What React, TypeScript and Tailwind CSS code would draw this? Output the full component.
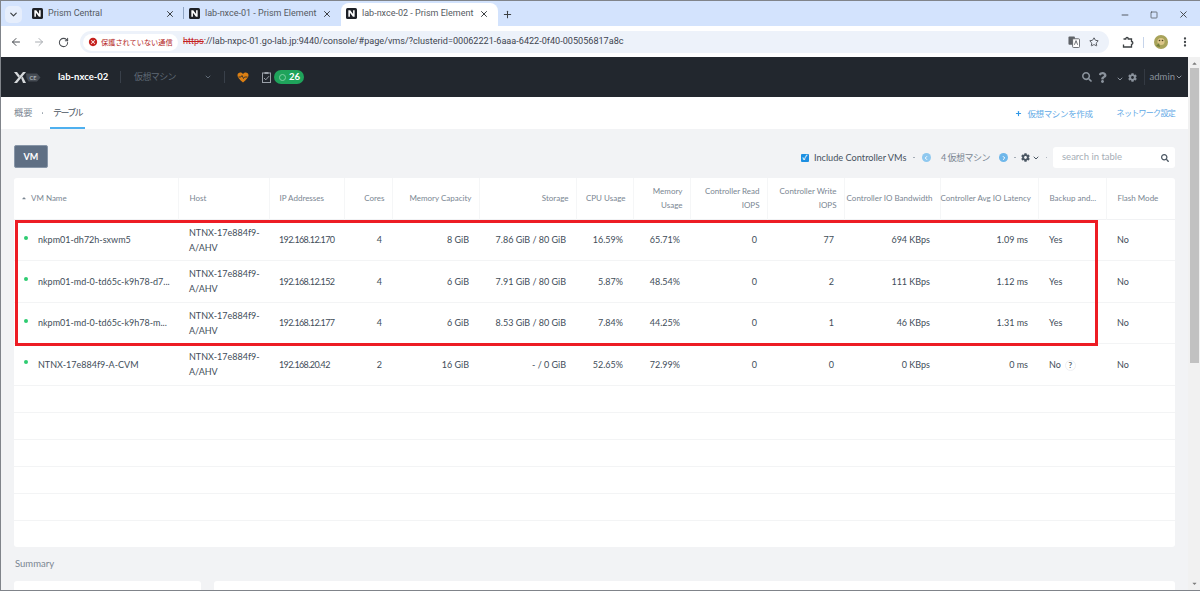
import React from "react";
import { ArrowLeft, ArrowRight, RotateCw, Star, MoreVertical, Minus, Square, X, Plus, ChevronDown, ChevronLeft, ChevronRight } from "lucide-react";
import { FaSearch, FaCog, FaQuestion, FaCaretUp, FaCaretDown } from "react-icons/fa";
import { MdCancel } from "react-icons/md";

const ui = "font-['Lato','Liberation_Sans','Noto_Sans_CJK_JP',sans-serif]";
const jp = "font-['Noto_Sans_CJK_JP',sans-serif]";

function TabLogo() {
  return (
    <svg width="11" height="11" viewBox="0 0 14 14" className="shrink-0">
      <rect width="14" height="14" rx="2" fill="#1e2127" />
      <path d="M3 3h2.400l3.600 4.600V3H11v8H8.800L5 6.200V11H3z" fill="#fff" />
    </svg>
  );
}

function Tab({ title, active, divider }: { title: string; active?: boolean; divider?: boolean }) {
  return (
    <div className={`relative flex h-[23px] w-[157px] items-center pb-[2px] pl-[5px] pr-[9px] ${active ? "rounded-t-[8px] bg-white" : ""}`}>
      <TabLogo />
      <span className="ml-[5px] flex-1 truncate font-['Roboto',sans-serif] text-[9px] text-[#555a62]">{title}</span>
      <X size={10} strokeWidth={2.4} className="text-[#3c4043]" />
      {divider && <span className="absolute right-0 top-[4px] h-[12px] w-px bg-[#8ea4c4]" />}
    </div>
  );
}

function ChromeBars() {
  return (
    <>
      <div className="flex h-[25px] items-end bg-[#d3e3fd]">
        <div className="mb-[3px] ml-[4px] flex h-[17px] w-[17px] items-center justify-center rounded-[5px] bg-[#e6eefc]">
          <ChevronDown size={11} strokeWidth={2.600} className="text-[#3c4043]" />
        </div>
        <div className="ml-[5px] flex">
          <Tab title="Prism Central" divider />
          <Tab title="lab-nxce-01 - Prism Element" />
          <Tab title="lab-nxce-02 - Prism Element" active />
        </div>
        <Plus size={11} strokeWidth={2.200} className="mb-[6px] ml-[4px] text-[#3c4043]" />
        <div className="mb-[6px] ml-auto flex items-center gap-[20px] pr-[11px] text-[#3c4043]">
          <Minus size={10} />
          <Square size={8} />
          <X size={11} />
        </div>
      </div>
      <div className="flex h-[31px] items-center bg-white pt-[1px]">
        <div className="flex w-[79px] items-center pl-[9px] text-[#4b4f54]">
          <ArrowLeft size={12} strokeWidth={2} />
          <ArrowRight size={12} strokeWidth={2} className="ml-[11px] text-[#a9adb2]" />
          <RotateCw size={11} strokeWidth={2.200} className="ml-[13px]" />
        </div>
        <div className="flex h-[22px] w-[1029px] items-center rounded-full bg-[#edf2fa] pl-[3px]">
          <div className="flex h-[17px] w-[95px] items-center rounded-full bg-white pl-[5px]">
            <MdCancel size={10} className="shrink-0 text-[#c5221f]" />
            <span className={`ml-[3px] whitespace-nowrap text-[7.200px] text-[#b3261e] ${jp}`}>保護されていない通信</span>
          </div>
          <span className="ml-[5px] whitespace-nowrap font-['Roboto',sans-serif] text-[9.100px] text-[#3e4550]">
            <span className="text-[#c5221f] line-through">https</span>://lab-nxpc-01.go-lab.jp:9440/console/#page/vms/?clusterid=00062221-6aaa-6422-0f40-005056817a8c
          </span>
          <div className="ml-auto flex items-center gap-[9px] pr-[10px] text-[#474c52]">
            <svg width="12" height="12" viewBox="0 0 13 13"><rect x="0.5" y="0.5" width="7" height="9" rx="1" fill="#5f6368" /><rect x="5" y="3" width="7.500" height="9.500" rx="1" fill="#fff" stroke="#5f6368" /><path d="M7 9.500l1.700-4.500 1.700 4.500" fill="none" stroke="#5f6368" /></svg>
            <Star size={10} strokeWidth={2.200} />
          </div>
        </div>
        <svg width="12" height="12" viewBox="0 0 12 12" className="ml-[13px]">
          <path d="M1.500 3h2.200c0-2 2.600-2 2.600 0h3.200v2.500c1.800 0 1.800 2.800 0 2.800V11H1.500V8.500" fill="none" stroke="#3c4043" strokeWidth="1.300" />
        </svg>
        <span className="ml-[9px] h-[11px] w-px bg-[#c6d4ea]" />
        <svg width="14" height="14" viewBox="0 0 14 14" className="ml-[10px]"><circle cx="7" cy="7" r="7" fill="#a8a35a" /><circle cx="7" cy="6.500" r="3.600" fill="#dcc68a" /><circle cx="5.500" cy="5.500" r="0.800" fill="#4a3e1e" /><circle cx="8.500" cy="5.500" r="0.800" fill="#4a3e1e" /><path d="M2 11l3-3 1 4z" fill="#6e7d3a" /></svg>
        <MoreVertical size={12} strokeWidth={2.600} className="ml-[11px] text-[#3c4043]" />
      </div>
    </>
  );
}

function NavBar() {
  return (
    <div className={`flex h-[40px] shrink-0 items-center bg-[#22272e] ${ui}`}>
      <svg width="27" height="11" viewBox="0 0 27 11" className="ml-[13px]">
        <path d="M0 0h3l3 4-1.500 1.800zM12 0H9L0 11h3zM7.200 6.200L8.700 4.500 12 11H9z" fill="#d5d8db" />
        <path d="M12 1.500h11l3.500 4-3.500 4H14.500L12.500 6z" fill="#454b53" />
        <text x="15.500" y="7.500" fontSize="5.500" fontWeight="700" fill="#a9afb6" fontFamily="Lato">CE</text>
      </svg>
      <span className="ml-[17px] w-[62px] text-[9.500px] font-bold text-white">lab-nxce-02</span>
      <span className="h-[12px] w-px bg-[#39404a]" />
      <span className={`ml-[13px] w-[70px] text-[9px] tracking-[-0.6px] text-[#5f6975] ${jp}`}>仮想マシン</span>
      <ChevronDown size={8} strokeWidth={3} className="text-[#5f6975]" />
      <span className="ml-[12px] h-[12px] w-px bg-[#39404a]" />
      <svg width="12" height="11" viewBox="0 0 24 22" className="ml-[12px]">
        <path d="M12 21C5 15 1 11 1 6.500 1 3 3.700 1 6.500 1 9 1 11 2.300 12 4c1-1.700 3-3 5.500-3C20.300 1 23 3 23 6.500 23 11 19 15 12 21z" fill="#db7f13" />
        <path d="M3 10h5l2-3 3 6 2-3h6" fill="none" stroke="#22272e" strokeWidth="1.600" />
      </svg>
      <svg width="9" height="11" viewBox="0 0 9 11" className="ml-[13px]">
        <rect x="0.500" y="1" width="8" height="9.500" fill="none" stroke="#9aa0a8" />
        <rect x="2.500" y="0" width="4" height="2" fill="#9aa0a8" />
        <path d="M2 6l1.800 1.800L7 4.200" fill="none" stroke="#9aa0a8" />
      </svg>
      <div className="ml-[3px] flex h-[14px] w-[30px] items-center gap-[3px] rounded-full bg-[#1fa35b] pl-[5px]">
        <span className="h-[7px] w-[7px] rounded-full border-[1.500px] border-[#7fd0a3]" />
        <span className="text-[9.500px] font-bold leading-none text-white">26</span>
      </div>
      <div className="ml-auto flex items-center pr-[5px] text-[#8a929c]">
        <FaSearch size={10} />
        <FaQuestion size={11} className="ml-[5px]" />
        <ChevronDown size={8} strokeWidth={3} className="ml-[8px] mt-[3px]" />
        <FaCog size={9} className="ml-[4px]" />
        <span className="ml-[7px] h-[16px] w-px bg-[#343a43]" />
        <span className="ml-[5px] text-[9.500px]">admin</span>
        <ChevronDown size={8} strokeWidth={3} />
      </div>
    </div>
  );
}

function SubNav() {
  return (
    <div className={`flex h-[32px] shrink-0 items-center bg-white ${ui}`}>
      <span className={`ml-[13px] text-[9.300px] text-[#7b8793] ${jp}`}>概要</span>
      <span className="ml-[9px] h-[1.500px] w-[1.500px] rounded-full bg-[#9aa3ad]" />
      <div className="relative ml-[7px] flex h-full items-center px-[3px]">
        <span className={`text-[9px] tracking-[-1.700px] text-[#4a5561] ${jp}`}>テーブル</span>
        <span className="absolute bottom-0 left-0 h-[2px] w-full bg-[#4fb0ef]" />
      </div>
      <div className={`ml-auto flex items-center pr-[13px] text-[#5fa9e6] ${jp}`}>
        <Plus size={7} strokeWidth={4} className="text-[#2f97e6]" />
        <span className="ml-[5px] text-[8.500px] tracking-[-0.350px]">仮想マシンを作成</span>
        <span className="ml-[24px] text-[8px] tracking-[-0.700px]">ネットワーク設定</span>
      </div>
    </div>
  );
}

const widths = [164, 91, 75, 48, 87, 97, 57, 57, 77, 77, 96, 98, 68, 69];
const heads: [React.ReactNode, "l" | "r"][] = [
  ["VM Name", "l"], ["Host", "l"], ["IP Addresses", "l"], ["Cores", "r"], ["Memory Capacity", "r"], ["Storage", "r"], ["CPU Usage", "r"],
  [<>Memory<br />Usage</>, "r"], [<>Controller Read<br />IOPS</>, "r"], [<>Controller Write<br />IOPS</>, "r"],
  ["Controller IO Bandwidth", "r"], ["Controller Avg IO Latency", "r"], ["Backup and...", "l"], ["Flash Mode", "l"],
];
const rows = [
  ["nkpm01-dh72h-sxwm5", "192.168.12.170", "4", "8 GiB", "7.86 GiB / 80 GiB", "16.59%", "65.71%", "0", "77", "694 KBps", "1.09 ms", "Yes", "No"],
  ["nkpm01-md-0-td65c-k9h78-d7...", "192.168.12.152", "4", "6 GiB", "7.91 GiB / 80 GiB", "5.87%", "48.54%", "0", "2", "111 KBps", "1.12 ms", "Yes", "No"],
  ["nkpm01-md-0-td65c-k9h78-m...", "192.168.12.177", "4", "6 GiB", "8.53 GiB / 80 GiB", "7.84%", "44.25%", "0", "1", "46 KBps", "1.31 ms", "Yes", "No"],
  ["NTNX-17e884f9-A-CVM", "192.168.20.42", "2", "16 GiB", "- / 0 GiB", "52.65%", "72.99%", "0", "0", "0 KBps", "0 ms", "No", "No"],
];

function Table() {
  return (
    <div className="relative mt-[10px] w-[1161px] rounded-[3px] bg-white">
      <table className="w-full table-fixed border-collapse">
        <colgroup>
          {widths.map((w, i) => <col key={i} style={{ width: w }} />)}
        </colgroup>
        <thead>
          <tr className="h-[41px] border-b border-[#f1f2f4]">
            {heads.map(([h, a], i) => (
              <th key={i} className={`whitespace-nowrap border-r border-[#f5f6f7] text-[8px] font-normal leading-[14.500px] text-[#7a8692] last:border-r-0 ${a === "r" ? "pr-[7px] text-right" : i === 0 ? "pl-[7px] text-left" : i === 2 ? "pl-[10px] text-left" : "pl-[11px] text-left"}`}>
                {i === 0 ? (
                  <span className="flex items-center"><FaCaretUp size={6} className="mr-[4px] text-[#7a8692]" />{h}</span>
                ) : h}
              </th>
            ))}
          </tr>
        </thead>
        <tbody>
          {rows.map((r, idx) => (
            <tr key={idx} className="h-[41.500px] border-b border-[#f3f4f5] text-[9px] leading-[15px] text-[#414d59]">
              <td className="pl-[10px]">
                <div className="flex items-center">
                  <span className="mb-[4px] h-[4px] w-[4px] shrink-0 rounded-full bg-[#2ecc71]" />
                  <span className="ml-[10px] whitespace-nowrap">{r[0]}</span>
                </div>
              </td>
              <td className="whitespace-nowrap pl-[11px]">NTNX-17e884f9-<br />A/AHV</td>
              <td className="pl-[10px] tracking-[-0.600px]">{r[1]}</td>
              {r.slice(2, 11).map((c, i) => (
                <td key={i} className="whitespace-nowrap pr-[10px] text-right">{c}</td>
              ))}
              <td className="pl-[11px]">
                {r[11]}
                {idx === 3 && <span className="ml-[4px] inline-flex h-[11px] w-[11px] items-center justify-center rounded-full border border-[#f0f1f3] text-[8px] font-bold text-[#5b6670]">?</span>}
              </td>
              <td className="pl-[11px]">{r[12]}</td>
            </tr>
          ))}
          {[0, 1, 2, 3, 4, 5].map((i) => (
            <tr key={i} className="h-[27px] border-b border-[#f3f4f5] last:border-b-0"><td colSpan={14} /></tr>
          ))}
        </tbody>
      </table>
      <div className="pointer-events-none absolute left-[1px] top-[42px] h-[126px] w-[1083px] border-[3px] border-[#ed1c24]" />
    </div>
  );
}

function Toolbar() {
  return (
    <div className={`flex h-[23px] items-center ${ui}`}>
      <button className="flex h-[23px] w-[34px] items-center justify-center rounded-[2px] border border-[#8896a8] bg-[#5f6f84] text-[9px] font-bold text-white">VM</button>
      <div className="ml-auto mt-[2px] flex items-center text-[#46525e]">
        <span className="flex h-[8px] w-[8px] items-center justify-center rounded-[1px] bg-[#1d8fe1] text-[7px] font-bold leading-none text-white">✓</span>
        <span className="ml-[5px] whitespace-nowrap text-[9.200px]">Include Controller VMs</span>
        <span className="ml-[7px] h-[1.500px] w-[1.500px] rounded-full bg-[#9aa3ad]" />
        <span className="ml-[7px] flex h-[9px] w-[9px] items-center justify-center rounded-full bg-[#8fc8ef]"><ChevronLeft size={6} strokeWidth={4} className="text-white" /></span>
        <span className={`ml-[10px] whitespace-nowrap text-[9px] tracking-[-0.500px] text-[#7a8692] ${ui}`}>4 仮想マシン</span>
        <span className="ml-[9px] flex h-[9px] w-[9px] items-center justify-center rounded-full bg-[#6fb7ea]"><ChevronRight size={6} strokeWidth={4} className="text-white" /></span>
        <span className="ml-[6px] h-[1.500px] w-[1.500px] rounded-full bg-[#9aa3ad]" />
        <FaCog size={9} className="ml-[5px] text-[#4b5763]" />
        <ChevronDown size={8} strokeWidth={3} className="ml-[2px] text-[#4b5763]" />
        <span className="ml-[6px] h-[1.500px] w-[1.500px] rounded-full bg-[#9aa3ad]" />
        <div className="ml-[6px] flex h-[21px] w-[122px] items-center rounded-[3px] bg-white pl-[9px] pr-[6px]">
          <span className="flex-1 text-[9.500px] text-[#a6aeb6]">search in table</span>
          <FaSearch size={8} className="text-[#4b5763]" />
        </div>
      </div>
    </div>
  );
}

export default function App() {
  return (
    <div className="flex h-[591px] w-[1200px] flex-col overflow-hidden border-y border-l border-[#80848a] bg-[#f2f3f5]">
      <ChromeBars />
      <div className="flex min-h-0 flex-1">
        <div className="flex min-w-0 flex-1 flex-col">
          <NavBar />
          <SubNav />
          <div className={`flex-1 overflow-hidden pl-[13px] pr-[13px] pt-[16px] ${ui}`}>
            <Toolbar />
            <Table />
            <div className="mt-[11px] pl-[1px] text-[9.500px] leading-[12px] text-[#7a8692]">Summary</div>
            <div className="mt-[11px] flex gap-[13px]">
              <div className="h-[20px] w-[187px] rounded-t-[3px] bg-white" />
              <div className="h-[20px] flex-1 rounded-t-[3px] bg-white" />
            </div>
          </div>
        </div>
        <div className="flex w-[12px] shrink-0 flex-col items-center bg-[#f1f1f1] text-[#7d7d7d]">
          <FaCaretUp size={7} className="mt-[3px]" />
          <div className="mt-[1px] h-[295px] w-[9px] bg-[#c1c1c1]" />
          <FaCaretDown size={7} className="mb-[3px] mt-auto" />
        </div>
      </div>
    </div>
  );
}
